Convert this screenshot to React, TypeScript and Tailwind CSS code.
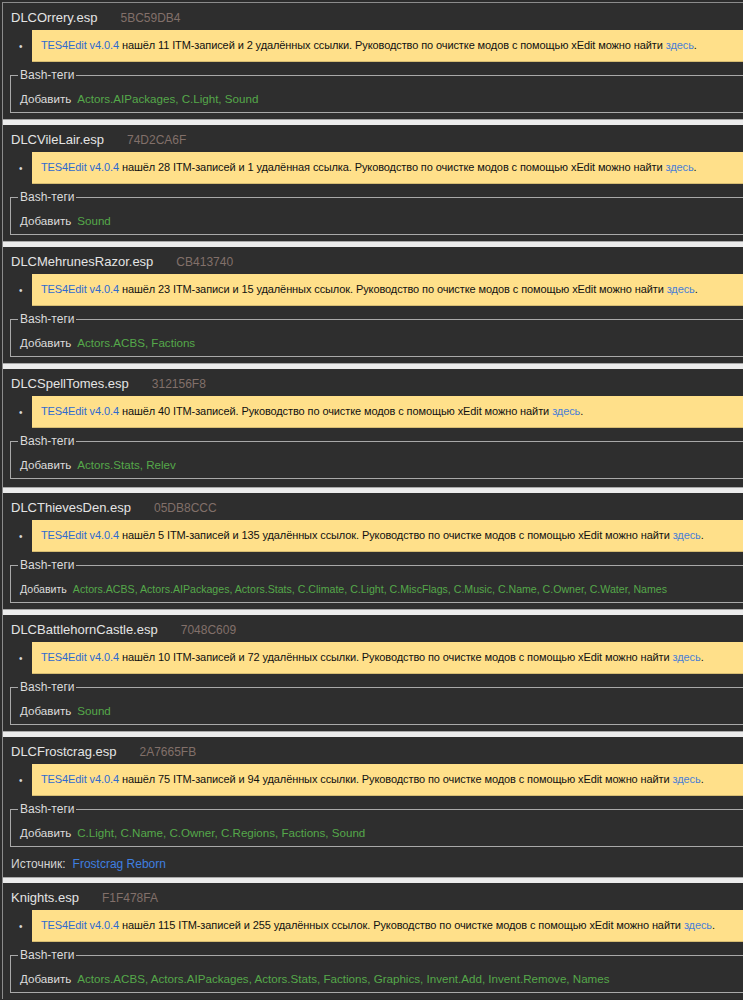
import React from "react";

type Plugin = {
  name: string;
  crc: string;
  itm: string;
  tags: string[];
  source?: string;
  compactTags?: boolean;
  extra?: boolean;
};

const plugins: Plugin[] = [
  {
    name: "DLCOrrery.esp",
    crc: "5BC59DB4",
    itm: "нашёл 11 ITM-записей и 2 удалённых ссылки.",
    tags: ["Actors.AIPackages", "C.Light", "Sound"],
  },
  {
    name: "DLCVileLair.esp",
    crc: "74D2CA6F",
    itm: "нашёл 28 ITM-записей и 1 удалённая ссылка.",
    tags: ["Sound"],
  },
  {
    name: "DLCMehrunesRazor.esp",
    crc: "CB413740",
    itm: "нашёл 23 ITM-записи и 15 удалённых ссылок.",
    tags: ["Actors.ACBS", "Factions"],
  },
  {
    name: "DLCSpellTomes.esp",
    crc: "312156F8",
    itm: "нашёл 40 ITM-записей.",
    tags: ["Actors.Stats", "Relev"],
    extra: true,
  },
  {
    name: "DLCThievesDen.esp",
    crc: "05DB8CCC",
    itm: "нашёл 5 ITM-записей и 135 удалённых ссылок.",
    tags: [
      "Actors.ACBS",
      "Actors.AIPackages",
      "Actors.Stats",
      "C.Climate",
      "C.Light",
      "C.MiscFlags",
      "C.Music",
      "C.Name",
      "C.Owner",
      "C.Water",
      "Names",
    ],
    compactTags: true,
  },
  {
    name: "DLCBattlehornCastle.esp",
    crc: "7048C609",
    itm: "нашёл 10 ITM-записей и 72 удалённых ссылки.",
    tags: ["Sound"],
  },
  {
    name: "DLCFrostcrag.esp",
    crc: "2A7665FB",
    itm: "нашёл 75 ITM-записей и 94 удалённых ссылки.",
    tags: ["C.Light", "C.Name", "C.Owner", "C.Regions", "Factions", "Sound"],
    source: "Frostcrag Reborn",
  },
  {
    name: "Knights.esp",
    crc: "F1F478FA",
    itm: "нашёл 115 ITM-записей и 255 удалённых ссылок.",
    tags: [
      "Actors.ACBS",
      "Actors.AIPackages",
      "Actors.Stats",
      "Factions",
      "Graphics",
      "Invent.Add",
      "Invent.Remove",
      "Names",
    ],
  },
];

const PluginCard = ({ plugin, first }: { plugin: Plugin; first: boolean }) => (
  <div className={first ? "border-t border-[#8c8c8c]" : ""}>
    {!first && <div className="h-[6px] border-t border-[#a8a8a8] bg-[#ececec]" />}

    <div className={`pl-[8px] pt-[5px] ${plugin.extra ? "pb-[8px]" : "pb-[6px]"}`}>
      {/* header */}
      <div className="flex h-[20px] items-center gap-[23px] whitespace-nowrap">
        <span className="text-[13px] leading-[20px] text-[#e4e4e4]">{plugin.name}</span>
        <span className="text-[12px] leading-[20px] text-[#82706a]">{plugin.crc}</span>
      </div>

      {/* cleaning message */}
      <div className="mt-[2px] flex items-center">
        <span className="w-[21px] flex-none pl-[8px] text-[10px] text-[#d8d8d8]">•</span>
        <div className="flex h-[32px] flex-1 items-center whitespace-nowrap border-b border-[#d6bc72] bg-[#ffe08a] pl-[9px] text-[11px] tracking-[-0.1px] text-[#111]">
          <span className="text-[#2f6ad0]">TES4Edit v4.0.4</span>
          <span className="whitespace-pre">
            {" "}
            {plugin.itm} Руководство по очистке модов с помощью xEdit можно найти{" "}
          </span>
          <span className="text-[#4a7fd6]">здесь</span>
          <span>.</span>
        </div>
      </div>

      {/* bash tags */}
      <fieldset className="ml-[-1px] mt-[6px] border border-[#a9a9a9] pb-[5px] pl-[9px] pt-[9px]">
        <legend className="ml-[-2px] px-[2px] text-[12px] leading-[14px] text-[#dcdcdc]">
          Bash-теги
        </legend>
        <div
          className={`flex h-[16px] items-center gap-[6px] whitespace-nowrap leading-[16px] ${
            plugin.compactTags ? "text-[10.6px]" : "text-[11.6px]"
          }`}
        >
          <span className="text-[#dcdcdc]">Добавить</span>
          <span className="text-[#55a84a]">{plugin.tags.join(", ")}</span>
        </div>
      </fieldset>

      {plugin.source && (
        <div className="mt-[10px] flex h-[14px] items-center gap-[7px] text-[12px] leading-[14px]">
          <span className="text-[#d4d4d4]">Источник:</span>
          <span className="text-[#3f7fe0]">{plugin.source}</span>
        </div>
      )}
    </div>
  </div>
);

export default function App() {
  return (
    <div
      className="min-h-[1000px] w-[743px] overflow-hidden bg-[#2c2c2c] pl-[2px] pt-[2px]"
      style={{ fontFamily: '"Liberation Sans", Arial, sans-serif' }}
    >
      <div className="w-[800px] border-l border-[#8c8c8c] bg-[#2e2e2e]">
        {plugins.map((p, i) => (
          <PluginCard key={p.name} plugin={p} first={i === 0} />
        ))}
      </div>
    </div>
  );
}
